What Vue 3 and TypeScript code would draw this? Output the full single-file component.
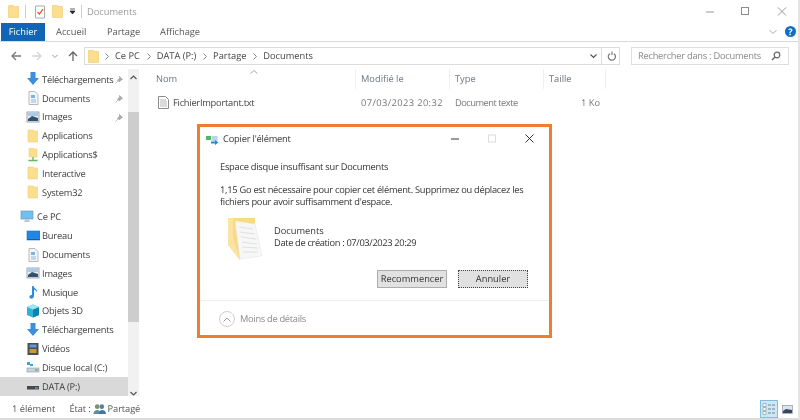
<script setup lang="ts">
type NavItem = { label: string; icon: string; pin?: boolean; selected?: boolean };
const quick: NavItem[] = [
  { label: 'Téléchargements', icon: 'down', pin: true },
  { label: 'Documents', icon: 'doc', pin: true },
  { label: 'Images', icon: 'img', pin: true },
  { label: 'Applications', icon: 'folder' },
  { label: 'Applications$', icon: 'share' },
  { label: 'Interactive', icon: 'folder' },
  { label: 'System32', icon: 'folder' },
];
const pc: NavItem[] = [
  { label: 'Bureau', icon: 'desk' },
  { label: 'Documents', icon: 'doc' },
  { label: 'Images', icon: 'img' },
  { label: 'Musique', icon: 'music' },
  { label: 'Objets 3D', icon: 'cube' },
  { label: 'Téléchargements', icon: 'down' },
  { label: 'Vidéos', icon: 'video' },
  { label: 'Disque local (C:)', icon: 'disk' },
  { label: 'DATA (P:)', icon: 'drive', selected: true },
];
const crumbs = ['Ce PC', 'DATA (P:)', 'Partage', 'Documents'];
</script>

<template>
  <div class="win">
    <header class="title">
      <svg class="ic" width="11" height="13" viewBox="0 0 11 13"><path d="M.5.500h5l1 1h4v11H.5z" fill="#fbdf8e" stroke="#eec868" stroke-width=".6" /></svg>
      <i class="vsep a" />
      <svg class="ic chk" width="12" height="14" viewBox="0 0 12 14"><path d="M1.500 1h9v12h-9z" fill="#fff" stroke="#a9a9a9" /><path d="M3.500 7l2 2 3.500-5" fill="none" stroke="#d9532c" stroke-width="1.300" /></svg>
      <svg class="ic fold2" width="11" height="13" viewBox="0 0 11 13"><path d="M.5.500h5l1 1h4v11H.5z" fill="#fbdf8e" stroke="#eec868" stroke-width=".6" /></svg>
      <svg class="ic drop" width="7" height="7" viewBox="0 0 7 7"><path d="M1 1h5M1 3h5L3.500 6z" fill="#222" stroke="#222" stroke-width=".7" /></svg>
      <i class="vsep b" />
      <span class="wtitle">Documents</span>
      <div class="caption">
        <svg width="35" height="12" viewBox="0 0 35 12"><path d="M0 6h8" stroke="#9a9a9a" /></svg>
        <svg width="36" height="12" viewBox="0 0 36 12"><rect x=".5" y="1.500" width="7" height="7" fill="none" stroke="#8d8d8d" /></svg>
        <svg width="10" height="12" viewBox="0 0 10 12"><path d="M1 1.500l8 8M9 1.500l-8 8" stroke="#9a9a9a" /></svg>
      </div>
    </header>

    <nav class="tabs">
      <span class="tab file">Fichier</span>
      <span class="tab">Accueil</span>
      <span class="tab">Partage</span>
      <span class="tab">Affichage</span>
      <svg class="chev" width="8" height="6" viewBox="0 0 8 6"><path d="M.5 1L4 4.500 7.500 1" fill="none" stroke="#a8a8a8" /></svg>
      <span class="help">?</span>
    </nav>

    <div class="addr">
      <div class="arrows">
        <svg width="12" height="12" viewBox="0 0 12 12"><path d="M11 6H2M6 2L2 6l4 4" fill="none" stroke="#7a7a7a" stroke-width="1.300" /></svg>
        <svg width="12" height="12" viewBox="0 0 12 12"><path d="M1 6h9M6 2l4 4-4 4" fill="none" stroke="#d6d6d6" stroke-width="1.300" /></svg>
        <svg width="6" height="5" viewBox="0 0 6 5"><path d="M.5 1L3 3.500 5.500 1" fill="none" stroke="#999" /></svg>
        <svg width="12" height="12" viewBox="0 0 12 12"><path d="M6 11V2M2 6l4-4 4 4" fill="none" stroke="#666" stroke-width="1.300" /></svg>
      </div>
      <div class="path">
        <svg width="11" height="13" viewBox="0 0 11 13"><path d="M.5.500h5l1 1h4v11H.5z" fill="#fbdf8e" stroke="#eec868" stroke-width=".6" /></svg>
        <template v-for="c in crumbs" :key="c">
          <svg class="sepchev" width="4" height="7" viewBox="0 0 4 7"><path d="M.5.500l3 3-3 3" fill="none" stroke="#888" /></svg>
          <span class="crumb">{{ c }}</span>
        </template>
        <span class="pathend">
          <svg width="7" height="5" viewBox="0 0 7 5"><path d="M.5.500L3.500 3.500 6.500.500" fill="none" stroke="#555" stroke-width="1.200" /></svg>
          <i class="psep" />
          <svg width="10" height="11" viewBox="0 0 10 11"><path d="M3 2.500a3.600 3.600 0 1 0 4 .200M5 .500v3.500" fill="none" stroke="#777" stroke-width="1.200" /></svg>
        </span>
      </div>
      <div class="search">
        <span>Rechercher dans : Documents</span>
        <svg width="10" height="10" viewBox="0 0 10 10"><circle cx="6" cy="4" r="2.800" fill="none" stroke="#666" stroke-width="1.200" /><path d="M4 6L1 9" stroke="#666" stroke-width="1.500" /></svg>
      </div>
    </div>

    <div class="main">
      <aside class="side">
        <div class="tree">
          <div v-for="item in quick" :key="item.label" class="row">
            <span class="nicon"><svg width="14" height="14" viewBox="0 0 14 14">
              <use :href="'#i-' + item.icon" />
            </svg></span>
            <span class="lbl">{{ item.label }}</span>
            <svg v-if="item.pin" class="pin" width="8" height="8" viewBox="0 0 8 8"><path d="M4.500.500l3 3-1.500.500-1.500 2-2-2 2-1.500zM3 5L.5 7.500" fill="#aaa" stroke="#999" stroke-width=".6" /></svg>
          </div>
          <div class="row pc">
            <svg width="14" height="13" viewBox="0 0 14 13"><rect x="1" y="1" width="12" height="8" fill="#6cc1f0" stroke="#7b97ac" stroke-width=".7" /><path d="M5 9.500h4l1 2.500H4z" fill="#bcc9d3" /></svg>
            <span class="lbl">Ce PC</span>
          </div>
          <div v-for="item in pc" :key="item.label + '2'" class="row" :class="{ sel: item.selected }">
            <span class="nicon"><svg width="14" height="14" viewBox="0 0 14 14">
              <use :href="'#i-' + item.icon" />
            </svg></span>
            <span class="lbl">{{ item.label }}</span>
          </div>
        </div>
        <div class="scroll">
          <svg class="sup" width="7" height="5" viewBox="0 0 7 5"><path d="M.5 4L3.500 1l3 3" fill="none" stroke="#555" stroke-width="1.200" /></svg>
          <div class="thumb" />
          <svg class="sdn" width="7" height="5" viewBox="0 0 7 5"><path d="M.5 1l3 3 3-3" fill="none" stroke="#555" stroke-width="1.200" /></svg>
        </div>
      </aside>

      <section class="files">
        <svg class="sort" width="8" height="4" viewBox="0 0 8 4"><path d="M.5 3.500L4 .5l3.500 3" fill="none" stroke="#aaa" /></svg>
        <div class="cols head">
          <span class="c1">Nom</span>
          <span class="c2">Modifié le</span>
          <span class="c3">Type</span>
          <span class="c4">Taille</span>
        </div>
        <div class="cols file-row">
          <span class="c1 fname">
            <svg width="11" height="13" viewBox="0 0 11 13"><path d="M.5.500h7l3 3v9H.5z" fill="#fff" stroke="#8c8c8c" /><path d="M2 4h6M2 6h7M2 8h7M2 10h7" stroke="#b5b5b5" /></svg>
            FichierImportant.txt
          </span>
          <span class="c2 fdate">07/03/2023 20:32</span>
          <span class="c3 ftype">Document texte</span>
          <span class="c4 size">1 Ko</span>
        </div>
      </section>
    </div>

    <footer class="status">
      <span>1 élément</span>
      <span class="state">État :
        <svg width="13" height="12" viewBox="0 0 14 12"><circle cx="4.500" cy="3.500" r="2.500" fill="#7d8f6f" /><circle cx="9.500" cy="3.500" r="2.500" fill="#5d7f9f" /><path d="M.5 11.500c0-6 8-6 8 0z" fill="#5f8f9f" /><path d="M6 11.500c0-6 8-6 8 0z" fill="#3f78a8" /></svg>
        Partagé</span>
      <div class="views">
        <span class="v active"><svg width="14" height="14" viewBox="0 0 14 14"><path d="M1 1.500h3v3H1zM1 5.500h3v3H1zM1 9.500h3v3H1z" fill="#fff" stroke="#8d9aa5" stroke-width=".7" /><path d="M6 3h3M10 3h3M6 7h3M10 7h3M6 11h3M10 11h3" stroke="#78838c" /></svg></span>
        <span class="v"><svg width="11" height="9" viewBox="0 0 11 9"><rect x=".5" y=".5" width="10" height="8" fill="#dce5ef" stroke="#8f98a3" stroke-width=".7" /><path d="M1 6l3-2 6 1v3H1z" fill="#33465c" /></svg></span>
      </div>
    </footer>

    <section class="callout">
      <div class="dlg">
        <div class="dtitle">
          <svg width="13" height="11" viewBox="0 0 13 11"><rect y="2" width="5" height="4" fill="#56b36a" /><rect x="5.500" y="2" width="6" height="5" fill="#b8d3ea" /><path d="M5 7.500h4V6l3.500 2.500L9 11V9.500H5z" fill="#2b88d8" /></svg>
          <span class="dname">Copier l'élément</span>
          <div class="dcaps">
            <svg width="37" height="10" viewBox="0 0 37 10"><path d="M0 5h8" stroke="#333" /></svg>
            <svg width="37" height="10" viewBox="0 0 37 10"><rect x=".5" y="1" width="7" height="7" fill="none" stroke="#dedede" /></svg>
            <svg width="9" height="10" viewBox="0 0 9 10"><path d="M.5.500l8 8M8.500.500l-8 8" stroke="#333" /></svg>
          </div>
        </div>
        <div class="dbody">
          <p class="head1">Espace disque insuffisant sur Documents</p>
          <p class="msg">1,15 Go est nécessaire pour copier cet élément. Supprimez ou déplacez les<br />fichiers pour avoir suffisamment d'espace.</p>
          <div class="item">
            <svg width="36" height="44" viewBox="0 0 36 44">
              <path d="M0 1H27V8L12 43 0 28z" fill="#f9d981" />
              <path d="M0 1H5V20L12 43 0 28z" fill="#fbe3a4" />
              <path d="M7 4l20 3 7 32-22 3z" fill="#f7f7f7" stroke="#e6e6e6" stroke-width=".6" />
              <path d="M11 10l14 2M12 15l15 2M13 20l15 2M14 25l15 2M14 30l16 1M15 35l15 0" stroke="#e0e0e0" />
            </svg>
            <div class="itxt"><div>Documents</div><div class="created">Date de création : 07/03/2023 20:29</div></div>
          </div>
          <div class="btns">
            <span class="btn">Recommencer</span>
            <span class="btn focus">Annuler</span>
          </div>
        </div>
        <div class="dfoot">
          <span class="circ"><svg width="8" height="5" viewBox="0 0 8 5"><path d="M.5 4.500L4 1l3.500 3.500" fill="none" stroke="#999" /></svg></span>
          <span class="less">Moins de détails</span>
        </div>
      </div>
    </section>

    <svg class="defs" width="0" height="0">
      <defs>
        <g id="i-folder"><path d="M2 1h5l1 1h3.500v11H2z" fill="#fbdf8e" stroke="#f0cf78" stroke-width=".6" /></g>
        <g id="i-share"><path d="M3 0h4l1 1h3v8H3z" fill="#fbdf8e" stroke="#f0cf78" stroke-width=".6" /><path d="M7 9v3M2.500 12.500h9" stroke="#5cb85c" stroke-width="1.300" /></g>
        <g id="i-down"><path d="M4.500 0h5v6H13l-6 7-6-7h3.500z" fill="#3b8fdc" /></g>
        <g id="i-doc"><path d="M3 .5h6l3 3v10H3z" fill="#f4f6f8" stroke="#a5a9ad" stroke-width=".8" /><path d="M5 4h4v3H5z" fill="#7cb3e0" /><path d="M5 9h5M5 11h5" stroke="#8fbbe0" /></g>
        <g id="i-img"><rect x="1" y="2" width="12" height="10" fill="#e6eef6" stroke="#8c96a0" stroke-width=".8" /><path d="M2 9l4-3 6 2v3H2z" fill="#33506f" /><path d="M2 3h10v3H2z" fill="#a8cbeb" /></g>
        <g id="i-desk"><rect x="1" y="2" width="13" height="9" fill="#1f88e5" stroke="#1976c5" stroke-width=".6" /><path d="M1.500 10.500h12" stroke="#0e5ea8" /></g>
        <g id="i-music"><path d="M6 1h1.500c.5 3 4.500 3 3.500 6.500-.5-2-2-2.500-3-3V11c0 2-2 3-3.500 2.500S3 11 4.500 10.300c.6-.3 1-.3 1.500-.2z" fill="#2a8be0" /></g>
        <g id="i-cube"><path d="M1 3l6-2.500L13 3v8l-6 2.500L1 11z" fill="#2fb2d8" /><path d="M7 5.500l6-2.500v8l-6 2.500z" fill="#0e84ab" /><path d="M1 3l6-2.500L13 3 7 5.500z" fill="#9ce6f5" /></g>
        <g id="i-video"><rect x="1.500" y="1" width="11" height="12" fill="#4a4f55" /><path d="M3.500 2.500h7v3h-7z" fill="#5f9bd5" /><path d="M3.500 7h7v4h-7z" fill="#c59b3a" /></g>
        <g id="i-disk"><path d="M1 2h3v3H1zM4 4h3v2H4z" fill="#3aa3dc" /><rect x="1" y="8" width="12" height="4" fill="#c8d2da" stroke="#8b98a2" stroke-width=".6" /><path d="M9 10h3" stroke="#4da855" /></g>
        <g id="i-drive"><rect x="1" y="7" width="12" height="3.500" fill="#45494d" /><path d="M9 9h3" stroke="#9fb0bd" /></g>
      </defs>
    </svg>
  </div>
</template>

<style>
html, body { margin: 0; background: #fff; }
</style>

<style scoped>
.win {
  position: relative; width: 800px; height: 420px; box-sizing: border-box; overflow: hidden;
  background: #fff; color: #444; font: 9.300px/1 "Open Sans", Lato, sans-serif; text-rendering: geometricPrecision;
  display: flex; flex-direction: column; border-right: 2px solid #e4e4e4; filter: blur(.35px);
}
svg { flex: none; display: block; }
.title { height: 22px; display: flex; align-items: center; padding: 1px 0 0 8px; box-sizing: border-box; }
.vsep { width: 1px; height: 13px; background: #cfcfcf; }
.vsep.a { margin: 0 8px 0 6px; }
.vsep.b { margin: 0 5px 0 5px; }
.fold2 { margin-left: 6px; }
.drop { margin-left: 6px; }
.wtitle { color: #9b9b9b; }
.caption { margin-left: auto; display: flex; align-items: center; padding-right: 11px; }

.tabs { height: 20px; display: flex; align-items: center; padding-left: 1px; border-bottom: 1px solid #dadada; box-sizing: border-box; }
.tab { color: #555; padding-top: 1px; box-sizing: border-box; }
.tab:nth-child(2) { width: 51px; margin-left: 11px; }
.tab:nth-child(3) { width: 53px; }
.tab.file { width: 44px; height: 18px; line-height: 17px; text-align: center; padding: 0; background: #1265b5; color: #fff; }
.chev { margin-left: auto; }
.help { width: 11px; height: 11px; margin: 0 2px 0 8px; border-radius: 50%; background: #0f6fc6; color: #fff; font-size: 9px; line-height: 11px; text-align: center; font-weight: 700; }

.addr { height: 27px; display: flex; align-items: flex-start; padding: 5px 9px 0 0; box-sizing: border-box; }
.arrows { width: 84px; height: 18px; display: flex; align-items: center; padding-left: 10px; box-sizing: border-box; gap: 9px; }
.path { width: 536px; height: 18px; box-sizing: border-box; border: 1px solid #dcdcdc; display: flex; align-items: center; padding-left: 3px; color: #444; gap: 6px; }
.crumb { margin-right: .8px; }
.pathend { margin-left: auto; display: flex; align-items: center; gap: 4px; padding-right: 2px; }
.psep { width: 1px; height: 16px; background: #dcdcdc; margin-right: 1px; }
.search { margin-left: 11px; width: 158px; height: 18px; box-sizing: border-box; border: 1px solid #dedede; display: flex; align-items: center; justify-content: space-between; padding: 0 7px 0 6px; color: #888; white-space: nowrap; letter-spacing: -.25px; }

.main { flex: 1; display: flex; min-height: 0; }
.side { width: 139px; display: flex; flex: none; }
.tree { width: 128px; padding-top: 1px; box-sizing: border-box; }
.row { position: relative; height: 18.800px; display: flex; align-items: center; padding-left: 26px; box-sizing: border-box; }
.row.pc { margin-top: 6px; padding-left: 20px; }
.row.pc .lbl { margin-left: 3px; }
.nicon { width: 16px; display: flex; }
.lbl { white-space: nowrap; color: #3d3d3d; letter-spacing: -.2px; }
.pin { position: absolute; left: 115px; top: 6px; }
.sel { background: #d9d9d9; }
.scroll { position: relative; width: 11px; background: #f1f1f1; }
.thumb { position: absolute; left: 0; right: 0; top: 43px; height: 210px; background: #cdcdcd; }
.sup { position: absolute; left: 2px; top: 6px; }
.sdn { position: absolute; left: 2px; top: 322px; }

.files { position: relative; flex: 1; min-width: 0; }
.sort { position: absolute; left: 111px; top: 1px; }
.cols { display: flex; align-items: center; }
.head { height: 20px; color: #6a7480; }
.head span { height: 20px; line-height: 20px; box-sizing: border-box; border-right: 1px solid #efefef; }
.c1 { width: 217px; padding-left: 17px; box-sizing: border-box; }
.c2 { width: 94px; padding-left: 5px; box-sizing: border-box; }
.c3 { width: 94px; padding-left: 5px; box-sizing: border-box; }
.c4 { width: 62px; padding-left: 5px; box-sizing: border-box; }
.file-row { margin-top: 4px; height: 19px; color: #777; }
.fname { display: flex; align-items: center; gap: 4px; padding-left: 19px; color: #444; letter-spacing: -.25px; }
.fdate { letter-spacing: .4px; }
.ftype { letter-spacing: -.5px; }
.size { text-align: right; padding: 0 6px 0 0; }

.status { height: 24px; display: flex; align-items: center; padding: 4px 0 0 12px; border-bottom: 2px solid #dcdcdc; box-sizing: border-box; color: #555; }
.state { display: flex; align-items: center; gap: 2px; margin-left: 14px; letter-spacing: -.1px; }
.views { margin-left: auto; display: flex; align-items: center; gap: 4px; padding-right: 5px; }
.v { display: flex; align-items: center; justify-content: center; box-sizing: border-box; }
.v.active { width: 18px; height: 18px; background: #cce8f7; border: 1px solid #7cc0de; }

.callout { position: absolute; left: 197px; top: 124px; width: 355px; height: 214px; box-sizing: border-box; border: 3px solid #ed7d31; background: #fff; }
.dlg { height: 100%; display: flex; flex-direction: column; color: #333; }
.dtitle { height: 24px; display: flex; align-items: center; gap: 4px; padding: 0 15px 0 6px; flex: none; }
.dname { letter-spacing: -.2px; }
.dcaps { margin-left: auto; display: flex; align-items: center; }
.dbody { flex: 1; padding: 10px 20px 0; position: relative; border-bottom: 1px solid #eeeeee; }
.head1 { margin: 0; line-height: 12px; letter-spacing: -.25px; }
.msg { margin: 10.500px 0 0; line-height: 12.500px; white-space: nowrap; letter-spacing: -.27px; }
.item { display: flex; align-items: flex-start; margin: 8px 0 0 8px; }
.itxt { margin: 8px 0 0 10px; line-height: 12.500px; }
.created { letter-spacing: -.35px; }
.btns { position: absolute; right: 21px; bottom: 12px; display: flex; gap: 11px; }
.btn { width: 70px; height: 18px; box-sizing: border-box; border: 1px solid #adadad; background: #e1e1e1; text-align: center; line-height: 16px; color: #333; }
.btn.focus { border: 1px dotted #444; }
.dfoot { height: 34px; flex: none; display: flex; align-items: center; gap: 5px; padding: 2px 0 0 19px; color: #8a8a8a; box-sizing: border-box; }
.less { letter-spacing: -.3px; }
.circ { width: 14px; height: 14px; border: 1px solid #cfcfcf; border-radius: 50%; display: flex; align-items: center; justify-content: center; }
.defs { position: absolute; }
</style>
